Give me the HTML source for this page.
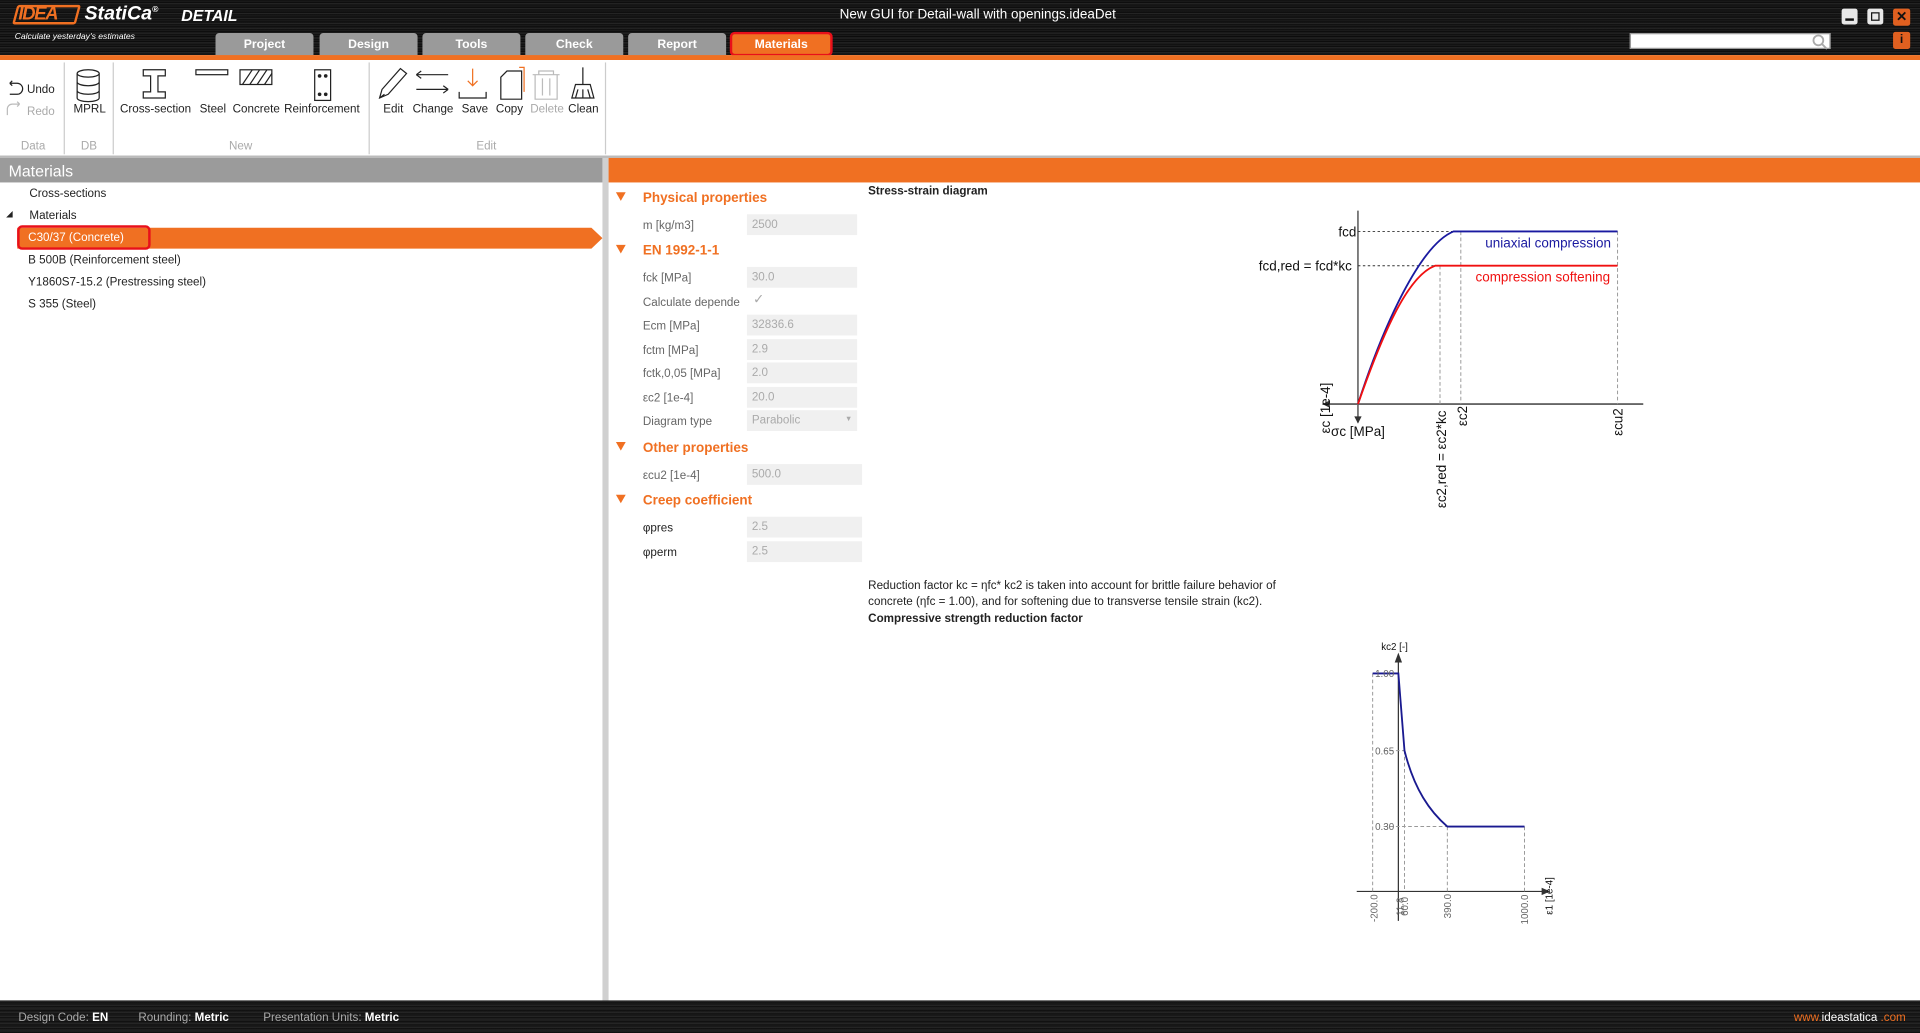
<!DOCTYPE html>
<html><head><meta charset="utf-8"><style>
html,body{margin:0;padding:0;width:1920px;height:1033px;overflow:hidden;background:#fff;}
#w{position:absolute;left:0;top:0;width:1568px;height:844px;transform:scale(1.22449);transform-origin:0 0;font-family:"Liberation Sans",sans-serif;font-size:10px;color:#333;}
.a{position:absolute;white-space:nowrap;}
.hdr{position:absolute;left:0;top:0;width:1568px;height:45px;background:repeating-linear-gradient(180deg,#0c0c0c 0,#1e1e1e 1px,#080808 2px,#2a2a2a 3px,#0e0e0e 4px);}
.tab{position:absolute;top:27px;height:19px;width:80px;background:#9a9a9a;border-radius:3px 3px 0 0;color:#fff;font-weight:bold;font-size:10px;text-align:center;line-height:19px;}
.lbl{color:#777;font-size:9.5px;}
.bt{font-size:9.5px;color:#222;}
.sep{position:absolute;top:51px;width:1px;height:75px;background:#ccc;}
.pl{position:absolute;left:525px;color:#666;font-size:9.5px;}
.pv{position:absolute;left:610px;width:90px;height:17px;background:#f0f0f0;color:#aaa;font-size:9.5px;line-height:17px;padding-left:4px;box-sizing:border-box;}
.sec{position:absolute;left:503px;color:#f07022;font-weight:bold;font-size:11px;}
.sec:before{content:"";display:inline-block;width:0;height:0;border-left:4px solid transparent;border-right:4px solid transparent;border-top:7px solid #f07022;margin-right:14px;vertical-align:1px;}
.tr{position:absolute;font-size:9.5px;color:#222;}
</style></head><body><div id="w">
<div class="hdr"></div>
<div class="a" style="left:12px;top:4px;width:52px;height:16px;border:2px solid #f07022;border-radius:2px;box-sizing:border-box;transform:skewX(-15deg);"></div>
<div class="a" style="left:15px;top:3px;color:#f07022;font-weight:bold;font-style:italic;font-size:15px;letter-spacing:-1px;">IDEA</div>
<div class="a" style="left:69px;top:3px;color:#fff;font-weight:bold;font-size:16px;font-style:italic;">StatiCa<sup style="font-size:7px">®</sup></div>
<div class="a" style="left:148px;top:5px;color:#fff;font-weight:bold;font-style:italic;font-size:13px;">DETAIL</div>
<div class="a" style="left:12px;top:27px;color:#fff;font-style:italic;font-size:7px;">Calculate yesterday's estimates</div>
<div class="a" style="left:0;top:6px;width:1597px;text-align:center;color:#fff;font-size:11px;">New GUI for Detail-wall with openings.ideaDet</div>
<div class="tab" style="left:176px">Project</div>
<div class="tab" style="left:261px">Design</div>
<div class="tab" style="left:345px">Tools</div>
<div class="tab" style="left:429px">Check</div>
<div class="tab" style="left:513px">Report</div>
<div class="tab" style="left:596px;width:84px;top:26px;height:20px;background:#f07022;border:2px solid #e8101a;box-sizing:border-box;border-radius:4px;line-height:17px;">Materials</div>
<div class="a" style="left:1331px;top:27px;width:164px;height:13px;background:#fff;border:1px solid #999;box-sizing:border-box;"></div>
<svg class="a" style="left:1479px;top:27px" width="14" height="14"><circle cx="6" cy="6" r="4" fill="none" stroke="#aaa" stroke-width="1.5"/><line x1="9" y1="9" x2="13" y2="13" stroke="#aaa" stroke-width="1.5"/></svg>
<div class="a" style="left:1504px;top:7px;width:13px;height:13px;background:#e8e8e8;border-radius:2px;"><div style="position:absolute;left:3px;top:8px;width:7px;height:2px;background:#111"></div></div>
<div class="a" style="left:1525px;top:7px;width:13px;height:13px;background:#e8e8e8;border-radius:2px;"><div style="position:absolute;left:3px;top:3px;width:5px;height:5px;border:1.5px solid #111"></div></div>
<div class="a" style="left:1546px;top:7px;width:14px;height:14px;background:#e06020;border-radius:2px;color:#111;font-weight:bold;font-size:11px;text-align:center;line-height:14px;">✕</div>
<div class="a" style="left:1546px;top:26px;width:14px;height:14px;background:#e06020;border-radius:2px;color:#111;font-weight:bold;font-size:10px;text-align:center;line-height:14px;">i</div>
<div class="a" style="left:0;top:45px;width:1568px;height:4px;background:#f07022;"></div>
<div class="sep" style="left:52px"></div><div class="sep" style="left:92px"></div><div class="sep" style="left:301px"></div><div class="sep" style="left:494px"></div>
<svg class="a" style="left:0;top:49px" width="500" height="78" fill="none" stroke="#222" stroke-width="1">
<path d="M8 19 h6 a4 4 0 0 1 0 9 h-6 M8 19 l2 -2 M8 19 l2 2" /><path d="M16 36 h-6 a4 4 0 0 0 -4 4 v5 M16 36 l-2 -2 M16 36 l-2 2" stroke="#bbb"/>
<ellipse cx="72" cy="11" rx="9" ry="3"/><path d="M63 11 v20 a9 3 0 0 0 18 0 v-20 M63 18 a9 3 0 0 0 18 0 M63 25 a9 3 0 0 0 18 0"/>
<path d="M117 8 h18 v5 h-6 v13 h6 v5 h-18 v-5 h6 v-13 h-6 z"/>
<rect x="160" y="8" width="26" height="4"/>
<rect x="196" y="8" width="26" height="12"/><path d="M198 20 l8 -12 M204 20 l8 -12 M210 20 l8 -12 M216 20 l6 -9" />
<rect x="257" y="8" width="13" height="25"/><circle cx="261" cy="13" r="1" fill="#222"/><circle cx="266" cy="13" r="1" fill="#222"/><circle cx="261" cy="28" r="1" fill="#222"/><circle cx="266" cy="28" r="1" fill="#222"/>
<path d="M310 31 l2 -7 l15 -17 l5 4 l-15 17 z M310 31 l4 -3"/>
<path d="M340 12 h26 M340 12 l4 -3 M340 12 l4 3 M340 24 h26 M366 24 l-4 -3 M366 24 l-4 3"/>
<path d="M386 7 v14 M382 17 l4 4 l4 -4" stroke="#f07022"/><path d="M375 26 v5 h22 v-5"/>
<path d="M409 14 l5 -5 h12 v23 h-17 z"/><path d="M424 6 h4 v20" stroke="#f07022"/>
<path d="M435 12 h22 M440 12 v-3 h12 v3 M437 12 v20 h18 v-20 M443 15 v14 M449 15 v14" stroke="#bbb"/>
<path d="M476 6 v14 M470 20 h12 l3 11 h-18 z M472 24 l-2 7 M476 24 v7 M480 24 l2 7"/>
</svg>
<div class="a bt" style="left:22px;top:68px;">Undo</div>
<div class="a" style="left:22px;top:86px;font-size:9.5px;color:#aaa;">Redo</div>
<div class="a bt" style="left:60px;top:84px;">MPRL</div>
<div class="a bt" style="left:98px;top:84px;">Cross-section</div>
<div class="a bt" style="left:163px;top:84px;">Steel</div>
<div class="a bt" style="left:190px;top:84px;">Concrete</div>
<div class="a bt" style="left:232px;top:84px;">Reinforcement</div>
<div class="a bt" style="left:313px;top:84px;">Edit</div>
<div class="a bt" style="left:337px;top:84px;">Change</div>
<div class="a bt" style="left:377px;top:84px;">Save</div>
<div class="a bt" style="left:405px;top:84px;">Copy</div>
<div class="a" style="left:433px;top:84px;font-size:9.5px;color:#aaa;">Delete</div>
<div class="a bt" style="left:464px;top:84px;">Clean</div>
<div class="a lbl" style="left:17px;top:114px;color:#aaa">Data</div>
<div class="a lbl" style="left:66px;top:114px;color:#aaa">DB</div>
<div class="a lbl" style="left:187px;top:114px;color:#aaa">New</div>
<div class="a lbl" style="left:389px;top:114px;color:#aaa">Edit</div>
<div class="a" style="left:0;top:127px;width:1568px;height:2px;background:#bbb;"></div>
<div class="a" style="left:0;top:129px;width:492px;height:20px;background:#9b9b9b;color:#fff;font-size:13px;line-height:21px;padding-left:7px;box-sizing:border-box;">Materials</div>
<div class="tr" style="left:24px;top:153px">Cross-sections</div>
<div class="tr" style="left:5px;top:171px;font-size:7px;">◢</div>
<div class="tr" style="left:24px;top:171px">Materials</div>
<svg class="a" style="left:14px;top:185px" width="480" height="19"><path d="M0 1 H469 L478 9.5 L469 18 H0 Z" fill="#f07022"/></svg>
<div class="a" style="left:14px;top:184px;width:109px;height:20px;border:2px solid #e8101a;border-radius:4px;box-sizing:border-box;"></div>
<div class="tr" style="left:23px;top:189px;color:#fff">C30/37 (Concrete)</div>
<div class="tr" style="left:23px;top:207px">B 500B (Reinforcement steel)</div>
<div class="tr" style="left:23px;top:225px">Y1860S7-15.2 (Prestressing steel)</div>
<div class="tr" style="left:23px;top:243px">S 355 (Steel)</div>
<div class="a" style="left:492px;top:129px;width:5px;height:688px;background:#d0d0d0;"></div>
<div class="a" style="left:497px;top:129px;width:1071px;height:20px;background:#f07022;"></div>
<div class="sec" style="top:156px">Physical properties</div>
<div class="pl" style="top:179px">m [kg/m3]</div><div class="pv" style="top:175px">2500</div>
<div class="sec" style="top:199px">EN 1992-1-1</div>
<div class="pl" style="top:222px">fck [MPa]</div><div class="pv" style="top:218px">30.0</div>
<div class="pl" style="top:242px">Calculate depende</div><div class="a" style="left:615px;top:238px;color:#aaa;font-size:11px;">✓</div>
<div class="pl" style="top:261px">Ecm [MPa]</div><div class="pv" style="top:257px">32836.6</div>
<div class="pl" style="top:281px">fctm [MPa]</div><div class="pv" style="top:277px">2.9</div>
<div class="pl" style="top:300px">fctk,0,05 [MPa]</div><div class="pv" style="top:296px">2.0</div>
<div class="pl" style="top:320px">εc2 [1e-4]</div><div class="pv" style="top:316px">20.0</div>
<div class="pl" style="top:339px">Diagram type</div><div class="pv" style="top:335px">Parabolic<span style="position:absolute;right:4px;font-size:6px;">▼</span></div>
<div class="sec" style="top:360px">Other properties</div>
<div class="pl" style="top:383px">εcu2 [1e-4]</div><div class="pv" style="top:379px;width:94px">500.0</div>
<div class="sec" style="top:403px">Creep coefficient</div>
<div class="pl" style="top:426px;color:#222">φpres</div><div class="pv" style="top:422px;width:94px">2.5</div>
<div class="pl" style="top:446px;color:#222">φperm</div><div class="pv" style="top:442px;width:94px">2.5</div>
<div class="a" style="left:709px;top:151px;font-size:9.5px;font-weight:bold;color:#222;">Stress-strain diagram</div>
<div class="a" style="left:709px;top:472px;font-size:9.5px;color:#222;line-height:13px;">Reduction factor kc = ηfc* kc2 is taken into account for brittle failure behavior of<br>concrete (ηfc = 1.00), and for softening due to transverse tensile strain (kc2).</div>
<div class="a" style="left:709px;top:500px;font-size:9.5px;font-weight:bold;color:#222;">Compressive strength reduction factor</div>
<svg class="a" style="left:0;top:0" width="1568" height="844" font-family="Liberation Sans, sans-serif">
<g fill="none">
<line x1="1109" y1="172" x2="1109" y2="345" stroke="#333"/>
<path d="M1106 340 L1109 346 L1112 340" fill="#333" stroke="none"/>
<line x1="1080" y1="330" x2="1342" y2="330" stroke="#666" stroke-width="1.5"/>
<path d="M1086 327 L1080 330 L1086 333" fill="#333"/>
<g stroke="#333" stroke-dasharray="2,2" stroke-width=".8"><line x1="1109" y1="189" x2="1193" y2="189"/><line x1="1109" y1="217" x2="1176" y2="217"/></g>
<g stroke="#999" stroke-dasharray="3,2" stroke-width=".8"><line x1="1176" y1="217" x2="1176" y2="330"/><line x1="1193" y1="189" x2="1193" y2="330"/><line x1="1321" y1="189" x2="1321" y2="330"/></g>
<path d="M1109 330 C1130 265 1160 200 1187 189 L1321 189" stroke="#1a1aa0" stroke-width="1.5"/>
<path d="M1109 330 C1130 270 1150 225 1172 217 L1321 217" stroke="#f01010" stroke-width="1.5"/>
</g>
<g font-size="11" fill="#111">
<text x="1093" y="193">fcd</text><text x="1028" y="221">fcd,red = fcd*kc</text>
<text x="1213" y="202" fill="#1a1aa0">uniaxial compression</text>
<text x="1205" y="230" fill="#f01010">compression softening</text>
<text x="1087" y="356">σc [MPa]</text>
<text transform="translate(1086,354) rotate(-90)">εc [1e-4]</text>
<text transform="translate(1181,415) rotate(-90)">εc2,red = εc2*kc</text>
<text transform="translate(1198,348) rotate(-90)">εc2</text>
<text transform="translate(1325,356) rotate(-90)">εcu2</text>
</g>
<g fill="none">
<line x1="1142" y1="535" x2="1142" y2="752" stroke="#333"/>
<path d="M1139 541 L1142 533 L1145 541" fill="#333"/>
<line x1="1108" y1="728" x2="1265" y2="728" stroke="#333"/>
<path d="M1259 725 L1266 728 L1259 731" fill="#333"/>
<g stroke="#999" stroke-dasharray="3,2" stroke-width=".8"><line x1="1121" y1="550" x2="1121" y2="728"/><line x1="1147" y1="613" x2="1147" y2="728"/><line x1="1182" y1="675" x2="1182" y2="728"/><line x1="1245" y1="675" x2="1245" y2="728"/><line x1="1130" y1="613" x2="1147" y2="613"/><line x1="1130" y1="675" x2="1182" y2="675"/></g>
<path d="M1121 550 L1142 550 L1147 613 C1155 645 1168 663 1182 675 L1245 675" stroke="#1a1a90" stroke-width="1.5"/>
</g>
<g font-size="8" fill="#666">
<text x="1128" y="531" fill="#111">kc2 [-]</text>
<text x="1123" y="553">1.00</text><text x="1123" y="616">0.65</text><text x="1123" y="678">0.30</text>
<text transform="translate(1125,753) rotate(-90)">-200.0</text>
<text transform="translate(1146,748) rotate(-90)">11.8</text>
<text transform="translate(1150,748) rotate(-90)">60.0</text>
<text transform="translate(1185,750) rotate(-90)">390.0</text>
<text transform="translate(1248,755) rotate(-90)">1000.0</text>
<text transform="translate(1268,747) rotate(-90)" fill="#111">ε1 [1e-4]</text>
</g>
</svg>
<div class="a" style="left:0;top:817px;width:1568px;height:27px;background:repeating-linear-gradient(180deg,#111 0,#2a2a2a 1px,#0c0c0c 2px,#222 3px);"></div>
<div class="a" style="left:15px;top:826px;font-size:9.5px;color:#aaa;">Design Code: <b style="color:#fff">EN</b></div>
<div class="a" style="left:113px;top:826px;font-size:9.5px;color:#aaa;">Rounding: <b style="color:#fff">Metric</b></div>
<div class="a" style="left:215px;top:826px;font-size:9.5px;color:#aaa;">Presentation Units: <b style="color:#fff">Metric</b></div>
<div class="a" style="left:1465px;top:826px;font-size:9.5px;color:#f07022;">www.<span style="color:#fff">ideastatica</span> .com</div>
</div></body></html>
